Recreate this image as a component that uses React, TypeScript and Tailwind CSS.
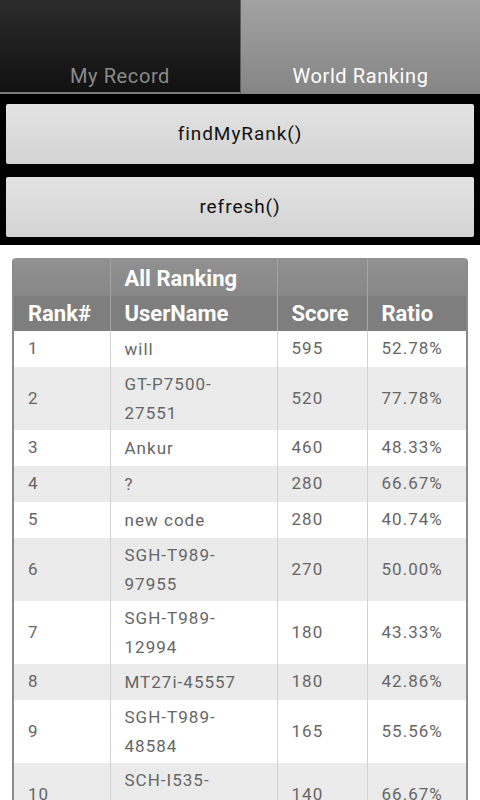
const rows: { rank: string; name: string[]; score: string; ratio: string }[] = [
  { rank: "1", name: ["will"], score: "595", ratio: "52.78%" },
  { rank: "2", name: ["GT-P7500-", "27551"], score: "520", ratio: "77.78%" },
  { rank: "3", name: ["Ankur"], score: "460", ratio: "48.33%" },
  { rank: "4", name: ["?"], score: "280", ratio: "66.67%" },
  { rank: "5", name: ["new code"], score: "280", ratio: "40.74%" },
  { rank: "6", name: ["SGH-T989-", "97955"], score: "270", ratio: "50.00%" },
  { rank: "7", name: ["SGH-T989-", "12994"], score: "180", ratio: "43.33%" },
  { rank: "8", name: ["MT27i-45557"], score: "180", ratio: "42.86%" },
  { rank: "9", name: ["SGH-T989-", "48584"], score: "165", ratio: "55.56%" },
  { rank: "10", name: ["SCH-I535-", "58103"], score: "140", ratio: "66.67%" },
];

export default function App() {
  return (
    <div className="h-[800px] w-[480px] overflow-hidden bg-white font-['Roboto',sans-serif]">
      {/* tabs */}
      <div className="flex h-[94px] bg-black">
        <div className="flex h-[94px] w-[240px] flex-col">
          <div className="flex flex-1 items-end justify-center bg-gradient-to-b from-[#2c2c2c] to-[#111111] pb-[1px] text-[20px] tracking-[0.03em] text-[#8a8a8a]">
            My Record
          </div>
          <div className="h-[2px] bg-[#7a7a7a]" />
        </div>
        <div className="w-[1px] bg-[#5a5a5a]" />
        <div className="flex h-[94px] w-[239px] items-end justify-center bg-gradient-to-b from-[#a2a2a2] to-[#858585] pb-[3px] text-[20px] tracking-[0.03em] text-white">
          World Ranking
        </div>
      </div>

      {/* action buttons */}
      <div className="flex flex-col gap-[13px] bg-black px-[6px] pb-[8px] pt-[10px]">
        <button className="h-[60px] rounded-[2px] bg-gradient-to-b from-[#e3e3e3] to-[#d3d3d3] text-[19px] tracking-[0.05em] text-[#111]">
          findMyRank()
        </button>
        <button className="h-[60px] rounded-[2px] bg-gradient-to-b from-[#e3e3e3] to-[#d3d3d3] text-[19px] tracking-[0.05em] text-[#111]">
          refresh()
        </button>
      </div>

      {/* ranking table */}
      <div className="mx-[12px] mt-[13px] overflow-hidden rounded-t-[4px] border-x-2 border-[#8a8a8a]">
        <table className="w-full table-fixed border-collapse text-left">
          <colgroup>
            <col className="w-[96px]" />
            <col className="w-[167px]" />
            <col className="w-[90px]" />
            <col />
          </colgroup>
          <thead className="text-[22px] font-bold text-white">
            <tr className="h-[38px] bg-gradient-to-b from-[#919191] to-[#878787]">
              <th className="border-r border-[#a5a5a5]" />
              <th className="border-r border-[#a5a5a5] px-[14px] pt-[2px] font-bold">All Ranking</th>
              <th className="border-r border-[#a5a5a5]" />
              <th />
            </tr>
            <tr className="h-[35px] bg-[#7e7e7e]">
              <th className="border-r border-[#a5a5a5] pl-[14px] font-bold">Rank#</th>
              <th className="border-r border-[#a5a5a5] pl-[14px] font-bold">UserName</th>
              <th className="border-r border-[#a5a5a5] pl-[14px] font-bold">Score</th>
              <th className="pl-[14px] font-bold">Ratio</th>
            </tr>
          </thead>
          <tbody className="text-[17px] tracking-[0.06em] text-[#666666]">
            {rows.map((r, i) => (
              <tr
                key={r.rank}
                className={`${r.name.length > 1 ? "h-[63px]" : "h-[36px]"} ${i % 2 === 1 ? "bg-[#ebebeb]" : "bg-white"}`}
              >
                <td className="border-r border-[#d2d2d2] pl-[14px]">{r.rank}</td>
                <td className="border-r border-[#d2d2d2] pl-[14px] leading-[29px]">
                  {r.name.map((n) => (
                    <div key={n}>{n}</div>
                  ))}
                </td>
                <td className="border-r border-[#d2d2d2] pl-[14px]">{r.score}</td>
                <td className="pl-[14px]">{r.ratio}</td>
              </tr>
            ))}
          </tbody>
        </table>
      </div>
    </div>
  );
}
